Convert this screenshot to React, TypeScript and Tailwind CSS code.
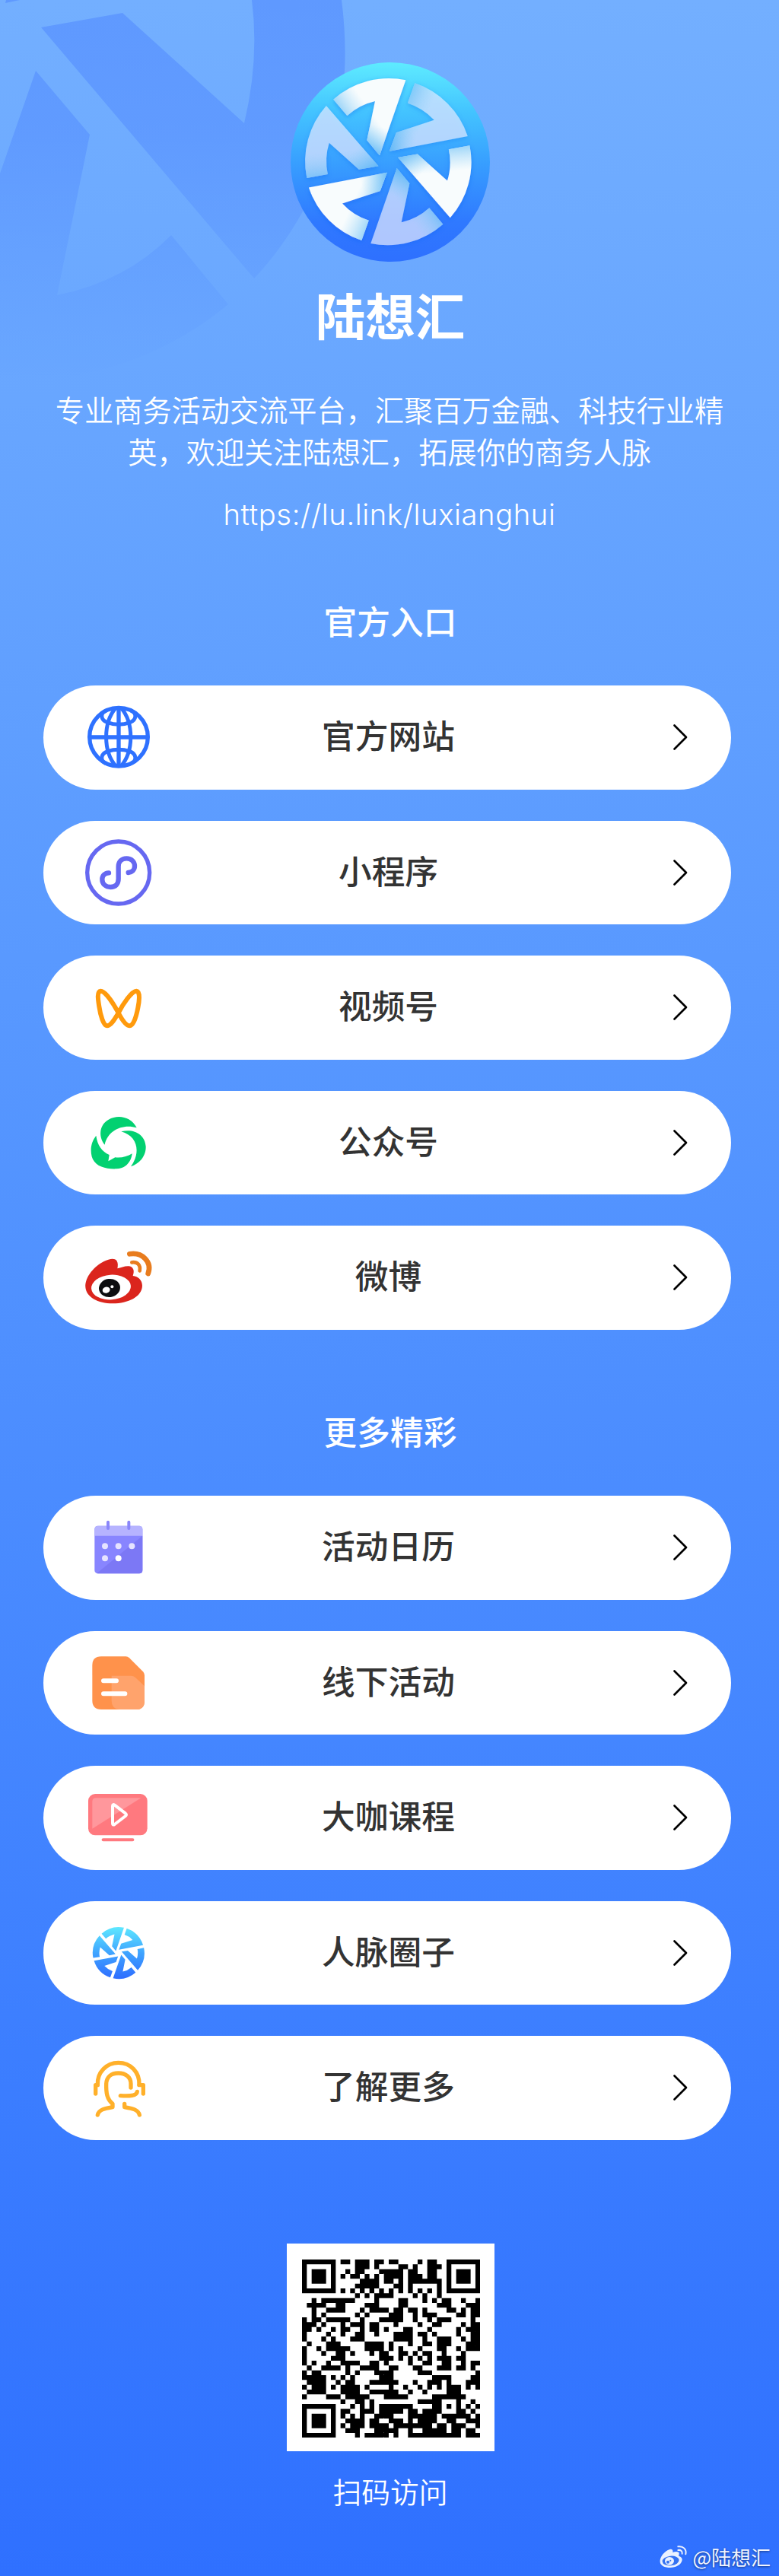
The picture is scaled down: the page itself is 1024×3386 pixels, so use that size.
import React from "react";

const CJK = "font-['Noto_Sans_CJK_SC',sans-serif]";

const BLADES = [
  "M206 182A330 330 0 0 1 491 106L388 403L338 343L370 189A244 244 0 0 0 260 246Z",
  "M527 116A330 330 0 0 1 735 328L427 387L455 310L602 262A244 244 0 0 0 498 196Z",
  "M745 363A330 330 0 0 1 667 650L461 410L540 398L656 502A244 244 0 0 0 663 379Z",
  "M640 677A330 330 0 0 1 352 751L456 453L507 514L476 666A244 244 0 0 0 586 612Z",
  "M316 741A330 330 0 0 1 109 527L416 471L390 545L242 594A244 244 0 0 0 345 661Z",
  "M98 492A330 330 0 0 1 179 206L383 443L305 459L188 354A244 244 0 0 0 182 480Z",
];

function Backdrop() {
  return (
    <svg className="absolute left-0 top-0" width="460" height="520" viewBox="0 0 460 520">
      <defs>
        <linearGradient id="fade" gradientUnits="userSpaceOnUse" x1="0" y1="0" x2="0" y2="500">
          <stop offset="0" stopColor="#4b83ff" stopOpacity="0.5" />
          <stop offset="0.35" stopColor="#4b83ff" stopOpacity="0.42" />
          <stop offset="1" stopColor="#4b83ff" stopOpacity="0" />
        </linearGradient>
      </defs>
      <g fill="url(#fade)">
        <path d="M7 4L26 0H8Z" />
        <path d="M54 36L161 17L321 162Q341 78 331 0H449C462 100 448 200 398 278Q370 328 334 366Z" />
        <path d="M47 93L118 177L75 388Q165 370 225 309L300 400Q180 500 0 505V228Z" />
      </g>
    </svg>
  );
}

function Logo() {
  return (
    <svg width="262" height="262" viewBox="37 36 786 786">
      <defs>
        <linearGradient id="disc" x1="0" y1="0" x2="0" y2="1">
          <stop offset="0" stopColor="#5eebff" />
          <stop offset="0.25" stopColor="#43c3ff" />
          <stop offset="0.5" stopColor="#389fff" />
          <stop offset="0.8" stopColor="#2f79ff" />
          <stop offset="1" stopColor="#2e70ff" />
        </linearGradient>
        <linearGradient id="outerEnd" gradientUnits="userSpaceOnUse" x1="225" y1="225" x2="310" y2="165">
          <stop offset="0" stopColor="#5bb9f5" stopOpacity="0.65" />
          <stop offset="1" stopColor="#8fd0f8" stopOpacity="0" />
        </linearGradient>
        <linearGradient id="innerEnd" gradientUnits="userSpaceOnUse" x1="365" y1="400" x2="395" y2="290">
          <stop offset="0" stopColor="#4fb0f5" stopOpacity="0.7" />
          <stop offset="1" stopColor="#8fd0f8" stopOpacity="0" />
        </linearGradient>
        <filter id="glow" x="-10%" y="-10%" width="120%" height="120%">
          <feDropShadow dx="0" dy="6" stdDeviation="10" floodColor="#1d5cf0" floodOpacity="0.4" />
        </filter>
      </defs>
      <circle cx="430" cy="429" r="393" fill="url(#disc)" />
      <g filter="url(#glow)">
        {[0, 1, 2, 3, 4, 5].map((k) => (
          <g key={k} transform={`rotate(${k * 60} 422 428)`}>
            <path d={BLADES[0]} fill={k % 2 ? "#e6eeff" : "#f8fcfd"} fillOpacity={k % 2 ? 0.66 : 1} />
            <path d={BLADES[0]} fill="url(#outerEnd)" />
            <path d={BLADES[0]} fill="url(#innerEnd)" />
          </g>
        ))}
      </g>
    </svg>
  );
}

function Icon({ y, children }: { y: number; children: React.ReactNode }) {
  return (
    <svg className="size-24 shrink-0" viewBox={`54 ${y} 288 288`} fill="none" strokeLinecap="round" strokeLinejoin="round">
      {children}
    </svg>
  );
}

const globe = (
  <Icon y={64}>
    <g stroke="#2e71ff" strokeWidth="16" strokeLinecap="butt">
      <circle cx="198" cy="207" r="115" />
      <path d="M198 92V322M83 208H313" />
      <path d="M187 92C136 150 136 264 187 322M207 92C258 150 258 264 207 322" strokeWidth="15" />
      <path d="M148 102C124 114 126 140 154 150Q198 166 242 150C268 140 272 114 246 102" strokeWidth="15" />
      <path d="M148 312C124 300 126 274 154 264Q198 250 242 264C268 274 272 300 246 312" strokeWidth="15" />
    </g>
  </Icon>
);

const miniProgram = (
  <Icon y={596}>
    <circle cx="197" cy="740" r="123" stroke="#6668f1" strokeWidth="16" />
    <path
      d="M159 741C142 742 133 753 133 767C133 785 147 797 166 797C185 797 197 785 197 765V716C197 697 210 684 229 684C248 684 261 697 261 714C261 729 250 739 236 740"
      stroke="#6668f1"
      strokeWidth="19"
    />
  </Icon>
);

const channels = (
  <Icon y={49}>
    <path
      d="M197 215C178 180 145 128 127 129C110 131 118 170 121 190C126 225 138 265 152 266C168 266 183 238 197 215C215 180 250 128 268 129C285 131 278 175 274 195C267 232 256 265 242 266C227 266 210 240 197 215Z"
      stroke="#ff9a0c"
      strokeWidth="18"
    />
  </Icon>
);

const officialAccount = (
  <Icon y={581}>
    <g fill="#02d171">
      <path d="M143 733C120 705 118 657 158 634C195 612 247 622 269 666C215 650 155 675 143 733Z" />
      <path d="M208 681C258 668 302 692 305 740C306 778 280 808 246 819C285 765 275 700 208 681Z" />
      <path d="M109 697C114 735 132 760 161 773L157 798L184 783C208 786 232 780 251 768C248 800 225 827 190 828C145 830 103 818 92 780C84 745 92 720 109 697Z" />
    </g>
  </Icon>
);

const weibo = (
  <Icon y={1114}>
    <path
      d="M67 1297C64 1255 105 1212 140 1195C160 1185 181 1180 190 1192C196 1202 195 1212 193 1223C210 1219 235 1207 250 1218C260 1227 258 1240 254 1252C275 1254 291 1270 291 1291C290 1335 235 1361 175 1361C115 1361 70 1335 67 1297Z"
      fill="#db251d"
    />
    <ellipse cx="168" cy="1297" rx="78" ry="49" transform="rotate(-4 168 1297)" fill="#fff" />
    <ellipse cx="162" cy="1300" rx="42" ry="36" transform="rotate(-8 162 1300)" fill="#0d0e10" />
    <ellipse cx="149" cy="1308" rx="15" ry="12" transform="rotate(-15 149 1308)" fill="#fff" />
    <circle cx="172" cy="1295" r="6" fill="#fff" />
    <path d="M241 1166C290 1158 331 1196 314 1243" stroke="#e87c1e" strokeWidth="20" />
    <path d="M250 1199C272 1196 285 1210 281 1232" stroke="#e87c1e" strokeWidth="14" />
  </Icon>
);

const calendar = (
  <Icon y={19}>
    <rect x="103" y="78" width="189" height="188" rx="13" fill="#8885ff" />
    <path d="M103 117V91Q103 78 116 78H279Q292 78 292 91V117Z" fill="#b6b3ff" />
    <path d="M292 117V253Q292 266 279 266H116L112 265Z" fill="#7c78f5" />
    <path d="M156 63V88M238 63V88" stroke="#8a86fa" strokeWidth="12" />
    <g fill="#e6e3ff">
      <circle cx="144" cy="158" r="12" />
      <circle cx="197" cy="158" r="12" />
      <circle cx="250" cy="158" r="12" />
      <circle cx="144" cy="206" r="12" />
    </g>
    <circle cx="197" cy="206" r="12" fill="#fff" />
  </Icon>
);

const article = (
  <Icon y={551}>
    <path
      d="M94 626Q94 591 129 591H226Q234 591 240 597L294 651Q300 657 300 665V766Q300 800 266 800H129Q94 800 94 765Z"
      fill="#ff924b"
    />
    <path d="M170 667H247Q256 667 263 673L300 708V766Q300 800 266 800H200Q170 797 170 765Z" fill="#ffa36c" />
    <path d="M138 687H189M138 738H223" stroke="#fff" strokeWidth="18" />
  </Icon>
);

const course = (
  <Icon y={4}>
    <rect x="78" y="55" width="233" height="163" rx="27" fill="#ff797f" />
    <path d="M94 85Q94 71 108 71H286L94 192Z" fill="#ff979c" />
    <path d="M174 103Q174 94 182 99L225 132Q231 137 225 142L182 175Q174 180 174 171Z" stroke="#fff" strokeWidth="12" />
    <rect x="131" y="230" width="128" height="12" rx="6" fill="#ff797f" />
  </Icon>
);

const circles = (
  <Icon y={536}>
    <defs>
      <linearGradient id="ring" gradientUnits="userSpaceOnUse" x1="0" y1="98" x2="0" y2="758">
        <stop offset="0" stopColor="#5de8ff" />
        <stop offset="0.5" stopColor="#3fa4ff" />
        <stop offset="1" stopColor="#2e6dff" />
      </linearGradient>
    </defs>
    <g transform="translate(197.5 680) scale(0.309) translate(-422 -428)">
      <path d={BLADES.join("")} fill="url(#ring)" />
    </g>
  </Icon>
);

const support = (
  <Icon y={1069}>
    <g stroke="#ffb02a" strokeWidth="16">
      <path d="M115 1202C113 1152 150 1115 197 1115C245 1115 281 1152 279 1202" />
      <path d="M107 1237V1203H115M279 1203H295V1237" />
      <path d="M246 1213V1198C246 1171 225 1156 197 1156C168 1156 150 1172 149 1198C148 1235 152 1258 174 1277V1290C150 1294 120 1298 115 1321" />
      <path d="M205 1245C240 1247 270 1246 271 1229" />
      <path d="M221 1277V1290C245 1294 275 1298 280 1321" />
    </g>
  </Icon>
);

const OFFICIAL = [
  { label: "官方网站", icon: globe },
  { label: "小程序", icon: miniProgram },
  { label: "视频号", icon: channels },
  { label: "公众号", icon: officialAccount },
  { label: "微博", icon: weibo },
];

const MORE = [
  { label: "活动日历", icon: calendar },
  { label: "线下活动", icon: article },
  { label: "大咖课程", icon: course },
  { label: "人脉圈子", icon: circles },
  { label: "了解更多", icon: support },
];

function LinkList({ items }: { items: { label: string; icon: React.ReactNode }[] }) {
  return (
    <div className="mt-[64px] ml-[57px] flex w-[904px] flex-col gap-[41px]">
      {items.map((item) => (
        <a key={item.label} className="flex h-[136.5px] items-center rounded-full bg-white pr-[57px] pl-[51px]">
          {item.icon}
          <span className="flex-1 pb-[8px] pl-[9px] text-center text-[43.7px] leading-[60px] font-medium text-[#333]">{item.label}</span>
          <span className="flex w-24 justify-end">
            <svg width="20" height="36" viewBox="0 0 20 36" fill="none" stroke="#000" strokeWidth="2.7" strokeLinecap="round" strokeLinejoin="round">
              <path d="M2.5 2.5L18 18L2.5 33.5" />
            </svg>
          </span>
        </a>
      ))}
    </div>
  );
}

function SectionTitle({ children }: { children: React.ReactNode }) {
  return <h2 className="h-11 pl-0.5 text-center text-[43.7px] leading-[44px] font-medium">{children}</h2>;
}

const QR_ROWS = [
  "#######.##.###.##.##....#.##..#######",
  "#.....#....###.#....##.#..###.#.....#",
  "#.###.#..#.##...#####.##..##..#.###.#",
  "#.###.#.#.##.#.#.####.###.##..#.###.#",
  "#.###.#.....####.##.#.#######.#.###.#",
  "#.....#....#####...##.#.....#.#.....#",
  "#######.#.#.#.#.#.#.#.#.#.#.#.#######",
  "...........#.#.####....#.#..#........",
  "..#.#######....#....##...#.#.##..#..#",
  ".####..##....###....##......###...###",
  "..#..####...#.####.##.##.#....##.#.##",
  "..#.#......#.#....###..#.###....##.##",
  "#.##.#####..#...#####..#..#.###....#.",
  "###.#...#.###.##...#....#..##....#.##",
  "##.#..#.##..#.##.#...##...#.....#.###",
  "#....#..#..##..#...####.##.#....#..##",
  "#...#.#...###......####..#..###..#.##",
  ".#...###.....####.#...#..##.###...###",
  "#..#.#####...####.#.#...#...##..#.###",
  "#...#..##.#...#.##..##.#.##..#...#...",
  "#.....###.......###.#.#.#.#.###.##...",
  "#.#..#..####..##.#....#..##..##..#.##",
  ".#..####.#..####..##...##...###.##.#.",
  "#.##.....#.#...####.....###.........#",
  "#####.#.#.#.....###........####....##",
  ".####..#.##...######...#..###.#...###",
  "#.###.#.####.#....#..#..#.#.#.###.#.#",
  ".####...####..######..#..#....###....",
  "#....###.#####...#####.....#######...",
  "........#..##.#.........#####...#..#.",
  "#######...#.#.#.#######....##.#.#.#.#",
  "#.....#.##..###.#####.##.####...##.#.",
  "#.###.#.#.#.#..####...######.######.#",
  "#.###.#..####.##..###.#.####..##..###",
  "#.###.#.#.###.####.########.##.###..#",
  "#.....#..###...#####..#..#####.##.##.",
  "#######....#.#####.#..###########.###",
];

function QrCode() {
  const modules = QR_ROWS.flatMap((row, y) => [...row].map((cell, x) => (cell === "#" ? `M${x} ${y}h1v1h-1z` : ""))).join("");
  return (
    <div className="mt-[136.5px] ml-[376.7px] flex size-[273.3px] items-center justify-center bg-white pt-[2px] pl-[2px]">
      <svg width="234.3" height="234.3" viewBox="0 0 37 37" shapeRendering="geometricPrecision">
        <path d={modules} fill="#000" />
      </svg>
    </div>
  );
}

function WeiboMark() {
  return (
    <svg width="37" height="32" viewBox="28 44 111 96" fill="none" strokeLinecap="round">
      <path
        d="M30 112C28 92 48 68 68 62C78 60 82 66 80 74C90 70 105 69 105 78C105 83 103 86 104 88C114 91 118 97 117 104C114 123 92 134 70 134C48 134 32 126 30 112Z"
        fill="#eaf1ff"
      />
      <ellipse cx="72" cy="107" rx="33" ry="19" transform="rotate(-6 72 107)" fill="#3472f2" />
      <ellipse cx="67" cy="108" rx="18" ry="16" fill="#eaf1ff" />
      <circle cx="61" cy="112" r="6" fill="#3472f2" />
      <circle cx="71" cy="106" r="3" fill="#3472f2" />
      <path d="M101 51C122 48 135 62 131 81M101 65C112 63 119 70 117 79" stroke="#eaf1ff" strokeWidth="6" />
    </svg>
  );
}

export default function App() {
  return (
    <main className={`relative h-[3386px] w-[1024px] overflow-hidden bg-linear-to-b from-[#73afff] to-[#2f70ff] text-white ${CJK}`}>
      <Backdrop />
      <div className="relative">
        <header className="flex flex-col items-center pt-[82px] text-center">
          <div className="pl-[2.6px]">
            <Logo />
          </div>
          <h1 className="mt-[36px] h-[66px] pl-0.5 text-[65.5px] leading-[66px] font-bold">陆想汇</h1>
          <p className="mt-[65px] text-[38.2px] leading-[54.6px] font-[350]">
            专业商务活动交流平台，汇聚百万金融、科技行业精
            <br />
            英，欢迎关注陆想汇，拓展你的商务人脉
          </p>
          <p className="mt-[29px] h-[54px] font-['Inter','Noto_Sans_CJK_SC',sans-serif] text-[38.2px] leading-[54px] font-[350] tracking-[0.6px]">
            https://lu.link/luxianghui
          </p>
        </header>

        <section className="mt-[90px]">
          <SectionTitle>官方入口</SectionTitle>
          <LinkList items={OFFICIAL} />
        </section>

        <section className="mt-[110.5px]">
          <SectionTitle>更多精彩</SectionTitle>
          <LinkList items={MORE} />
        </section>

        <QrCode />
        <p className="mt-[33px] h-[38px] pl-0.5 text-center text-[37.8px] leading-[38px] font-[350]">扫码访问</p>
      </div>

      <div className="absolute right-[11px] bottom-[9px] flex items-center gap-[6px]">
        <WeiboMark />
        <span className="text-[26px] leading-8 text-[#f1f5ff] [text-shadow:0_1px_3px_rgba(0,0,0,0.5)]">@陆想汇</span>
      </div>
    </main>
  );
}
